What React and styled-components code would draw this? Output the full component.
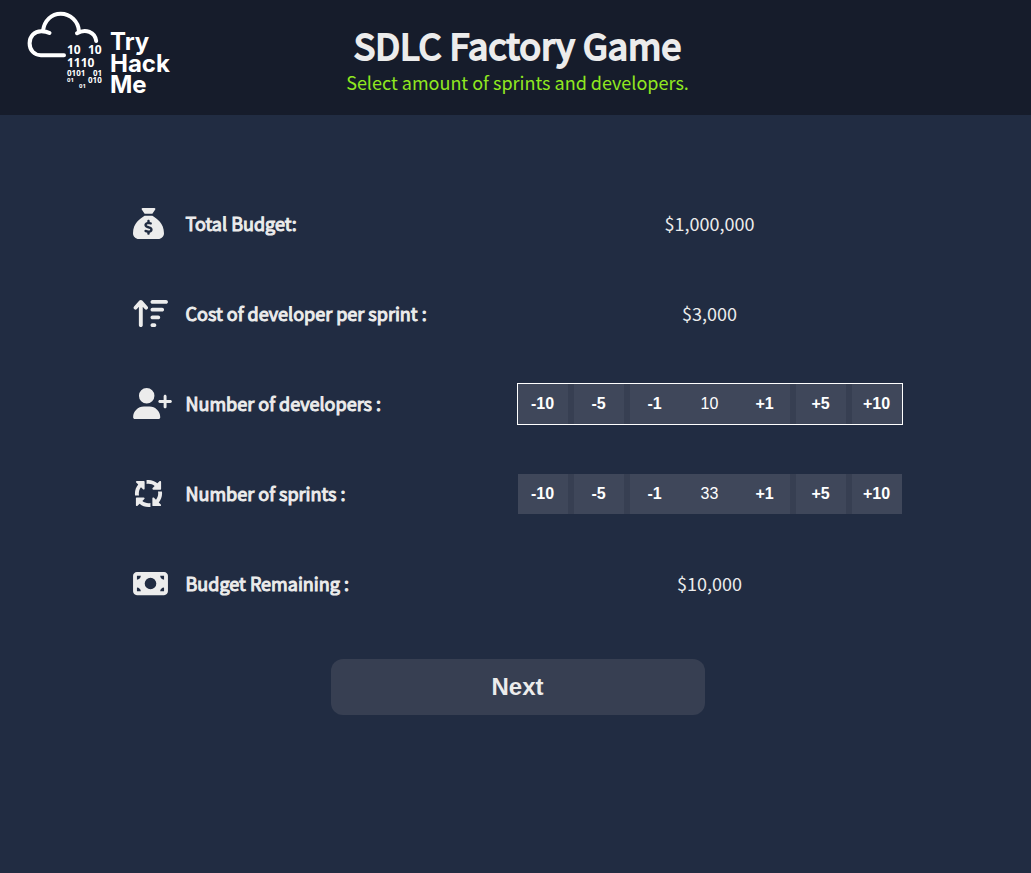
import React, { useState } from "react";
import styled, { createGlobalStyle } from "styled-components";
import {
  FaSackDollar,
  FaArrowUpWideShort,
  FaUserPlus,
  FaArrowsSpin,
  FaMoneyBill,
} from "react-icons/fa6";

const TOTAL_BUDGET = 1000000;
const COST_PER_SPRINT = 3000;

const GlobalStyle = createGlobalStyle`
  * { box-sizing: border-box; }
  body {
    margin: 0;
    background: #212c42;
    color: #ececec;
    font-family: "Noto Sans CJK SC", "Noto Sans", sans-serif;
  }
`;

const Page = styled.div`
  min-height: 100vh;
`;

const Header = styled.header`
  display: grid;
  grid-template-columns: 1fr auto 1fr;
  padding: 10px 20px 13px 24px;
  background: #161c2b;
`;

const LogoLink = styled.a`
  justify-self: start;
  color: #ffffff;
`;

const LogoSvg = styled.svg`
  display: block;
`;

const Heading = styled.div`
  padding-top: 10px;
  text-align: center;
`;

const Title = styled.h1`
  margin: 0;
  padding-bottom: 2px;
  font-size: 36px;
  font-weight: 400;
  line-height: 48px;
  -webkit-text-stroke: 2px currentColor;
`;

const Subtitle = styled.p`
  margin: 0;
  font-size: 18px;
  line-height: 24px;
  color: #90e820;
`;

const Main = styled.main`
  display: flex;
  flex-direction: column;
  align-items: center;
  padding: 63px 20px 40px 24px;
`;

const Rows = styled.div`
  width: 100%;
  max-width: 770px;
`;

const Row = styled.div`
  display: grid;
  grid-template-columns: 53px 1fr 386px;
  align-items: center;
  height: 90px;
`;

const RowIcon = styled.span`
  display: flex;

  svg {
    width: ${(p) => p.$width}px;
    height: 31px;
  }
`;

const RowLabel = styled.span`
  font-size: 18px;
  line-height: 24px;
  -webkit-text-stroke: 1px currentColor;
`;

const RowValue = styled.output`
  font-size: 18px;
  line-height: 24px;
  text-align: center;
`;

const Stepper = styled.div`
  display: flex;
  gap: 6px;
  margin-top: 2px;
  border: 1px solid ${(p) => (p.$active ? "#ffffff" : "transparent")};
  background: #373f52;
  background-clip: padding-box;
  font-family: "Liberation Sans", Arial, sans-serif;
`;

const StepperCore = styled.div`
  display: flex;
  flex: 1;
`;

const StepButton = styled.button`
  width: 50px;
  height: 40px;
  padding: 0;
  border: 0;
  background: #3f475a;
  color: #ffffff;
  font: bold 16px "Liberation Sans", Arial, sans-serif;
  cursor: pointer;
`;

const StepValue = styled.output`
  flex: 1;
  background: #3f475a;
  color: #ffffff;
  font-size: 16px;
  line-height: 40px;
  text-align: center;
`;

const NextButton = styled.button`
  width: 100%;
  max-width: 374px;
  height: 56px;
  margin-top: 31px;
  border: 0;
  border-radius: 12px;
  background: #373f52;
  color: #ececec;
  font: bold 24px "Liberation Sans", Arial, sans-serif;
  cursor: pointer;
`;

const LogoName = styled.text`
  font: 700 24px Inter, sans-serif;
`;

const LogoBits = styled.text`
  font: 700 ${(p) => p.$size}px "Noto Sans", sans-serif;
`;

function Logo() {
  return (
    <LogoSvg width="152" height="92" viewBox="24 10 152 92" fill="currentColor" role="img" aria-label="TryHackMe">
      <g fill="none" stroke="currentColor" strokeWidth="4" strokeLinecap="round">
        <path d="M64 55.2H41C34 55.2 29.6 50 29.6 43.2C29.6 36.4 34.4 31.2 41.2 31.2C44.4 31.2 47 31.5 49.5 33" />
        <path d="M43 30.5C44.5 20.5 51.5 13.8 60.7 13.8C70.5 13.8 78.5 21.5 79 31.5" />
        <path d="M77 33.2C85.5 28.3 95 32 96.2 41" />
      </g>
      <LogoBits x="67" y="54" $size={12}>10</LogoBits>
      <LogoBits x="88" y="54" $size={12}>10</LogoBits>
      <LogoBits x="67" y="67" $size={12}>1110</LogoBits>
      <LogoBits x="67" y="76" $size={8}>0101</LogoBits>
      <LogoBits x="93" y="76" $size={8}>01</LogoBits>
      <LogoBits x="88" y="83" $size={8}>010</LogoBits>
      <LogoBits x="67" y="82" $size={6}>01</LogoBits>
      <LogoBits x="79" y="88" $size={6}>01</LogoBits>
      <LogoName x="110" y="50">Try</LogoName>
      <LogoName x="110" y="72">Hack</LogoName>
      <LogoName x="110" y="93">Me</LogoName>
    </LogoSvg>
  );
}

function CountStepper({ labelId, value, onChange, active }) {
  const step = (delta) => (
    <StepButton type="button" onClick={() => onChange(Math.max(0, value + delta))}>
      {delta > 0 ? `+${delta}` : delta}
    </StepButton>
  );
  return (
    <Stepper role="group" aria-labelledby={labelId} $active={active}>
      {step(-10)}
      {step(-5)}
      <StepperCore>
        {step(-1)}
        <StepValue>{value}</StepValue>
        {step(1)}
      </StepperCore>
      {step(5)}
      {step(10)}
    </Stepper>
  );
}

function BudgetRow({ icon: Icon, iconWidth = 31, id, label, children }) {
  return (
    <Row>
      <RowIcon $width={iconWidth}>
        <Icon aria-hidden="true" />
      </RowIcon>
      <RowLabel id={id}>{label}</RowLabel>
      {children}
    </Row>
  );
}

const money = (amount) => `$${amount.toLocaleString("en-US")}`;

export default function App() {
  const [developers, setDevelopers] = useState(10);
  const [sprints, setSprints] = useState(33);
  const remaining = TOTAL_BUDGET - COST_PER_SPRINT * developers * sprints;

  return (
    <Page>
      <GlobalStyle />
      <Header>
        <LogoLink href="#">
          <Logo />
        </LogoLink>
        <Heading>
          <Title>SDLC Factory Game</Title>
          <Subtitle>Select amount of sprints and developers.</Subtitle>
        </Heading>
      </Header>
      <Main>
        <Rows>
          <BudgetRow icon={FaSackDollar} id="total" label="Total Budget:">
            <RowValue aria-labelledby="total">{money(TOTAL_BUDGET)}</RowValue>
          </BudgetRow>
          <BudgetRow icon={FaArrowUpWideShort} iconWidth={35} id="cost" label="Cost of developer per sprint :">
            <RowValue aria-labelledby="cost">{money(COST_PER_SPRINT)}</RowValue>
          </BudgetRow>
          <BudgetRow icon={FaUserPlus} iconWidth={39} id="developers" label="Number of developers :">
            <CountStepper labelId="developers" value={developers} onChange={setDevelopers} active />
          </BudgetRow>
          <BudgetRow icon={FaArrowsSpin} id="sprints" label="Number of sprints :">
            <CountStepper labelId="sprints" value={sprints} onChange={setSprints} />
          </BudgetRow>
          <BudgetRow icon={FaMoneyBill} iconWidth={35} id="remaining" label="Budget Remaining :">
            <RowValue aria-labelledby="remaining">{money(remaining)}</RowValue>
          </BudgetRow>
        </Rows>
        <NextButton type="button">Next</NextButton>
      </Main>
    </Page>
  );
}
